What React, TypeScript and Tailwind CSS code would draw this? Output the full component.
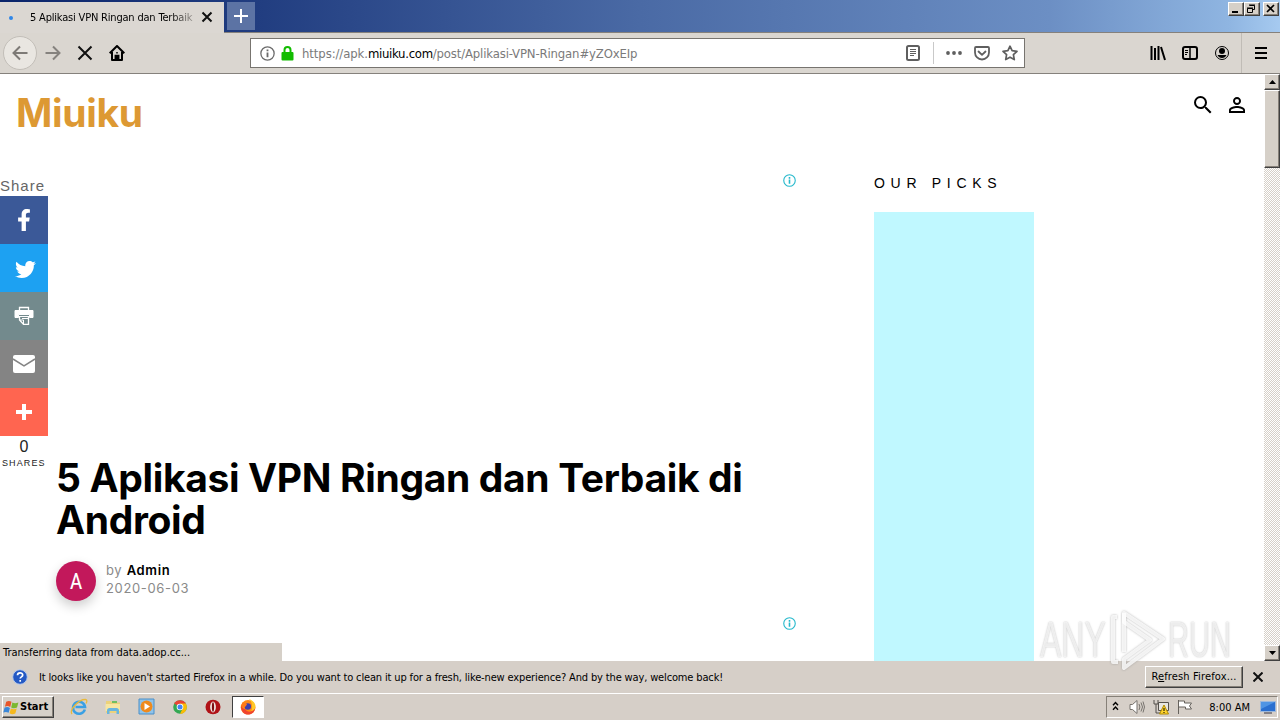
import type { ReactNode } from 'react';
import { FaFacebookF, FaTwitter } from 'react-icons/fa';
import { MdPersonOutline, MdSearch } from 'react-icons/md';

const UI = "font-['DejaVu_Sans_Condensed','DejaVu_Sans',sans-serif] [font-stretch:condensed]";
const RAISED =
  'border border-t-white border-l-white border-r-[#404040] border-b-[#404040] bg-[#d6d0c8] shadow-[inset_-1px_-1px_0_#868078]';

export default function App() {
  return (
    <div className={`relative flex h-[720px] w-[1280px] flex-col overflow-hidden bg-white text-black ${UI}`}>
      <TitleBar />
      <Toolbar />
      <div className="relative flex h-[587px] bg-white">
        <Page />
        <Scrollbar />
        <div className="absolute bottom-0 left-0 flex h-[18px] w-[282px] items-center bg-[#d6d0c8] pl-[3px] pt-[2px] text-[11px]">
          Transferring data from data.adop.cc...
        </div>
      </div>
      <Notification />
      <Taskbar />
      <Watermark />
    </div>
  );
}

function TitleBar() {
  return (
    <div className="flex h-[33px] border-b border-[#85817c] bg-[linear-gradient(to_right,#0a246a,#213d80_20%,#4a6aa5_50%,#6c8fc4_82%,#8fb5e1_96%,#a6caf0)] pt-[2px]">
      <div className="-mb-px flex w-[224px] items-center bg-[#dbd7d2] text-[11px]">
        <span className="ml-[9px] h-1 w-1 rounded-full bg-[#2f86e8]" />
        <span className="ml-[17px] w-[163px] whitespace-nowrap bg-linear-to-r from-black from-82% to-[#a09c97] bg-clip-text pt-px tracking-[-0.19px] text-transparent">
          5 Aplikasi VPN Ringan dan Terbaik
        </span>
        <svg className="mb-[2px] ml-[8px] h-[12px] w-[12px]" viewBox="0 0 12 12" stroke="#111" strokeWidth="2">
          <path d="M1.5 1.500l9 9M10.500 1.500l-9 9" />
        </svg>
      </div>
      <div className="ml-[3px] flex h-7 w-7 items-center justify-center bg-[#5c73a4]">
        <svg className="h-[14px] w-[14px]" viewBox="0 0 14 14" stroke="#fff" strokeWidth="2">
          <path d="M7 0v14M0 7h14" />
        </svg>
      </div>
      <div className="ml-auto flex pr-px">
        <WinButton>
          <path d="M4 10h6" strokeWidth="2" />
        </WinButton>
        <WinButton>
          <path d="M5.500 3.500h5v4h-2M5 3h6M3.500 6.500h5v4h-5zM3 6h6" />
        </WinButton>
        <span className="w-[3px]" />
        <WinButton>
          <path d="M4 3l7 7M11 3l-7 7" strokeWidth="1.700" />
        </WinButton>
      </div>
    </div>
  );
}

function WinButton({ children }: { children: ReactNode }) {
  return (
    <span className={`h-[14px] w-4 ${RAISED}`}>
      <svg className="-ml-px -mt-px h-[14px] w-4 max-w-none" viewBox="0 0 16 14" fill="none" stroke="#000">
        {children}
      </svg>
    </span>
  );
}

function Toolbar() {
  return (
    <div className="flex h-[41px] items-center border-b border-[#85817c] bg-[#dad6d0]">
      <span className="ml-[3px] flex h-[34px] w-[34px] items-center justify-center rounded-full border border-[#c2beb8] bg-[#e9e6e1]">
        <svg className="h-4 w-4" viewBox="0 0 16 16" fill="none" stroke="#7d7a76" strokeWidth="2">
          <path d="M15.500 8H1.500M8 1.500L1.500 8 8 14.500" />
        </svg>
      </span>
      <svg className="ml-[8px] h-4 w-4" viewBox="0 0 16 16" fill="none" stroke="#85827e" strokeWidth="2">
        <path d="M.5 8h14M8 1.500L14.500 8 8 14.500" />
      </svg>
      <svg className="ml-[16px] h-4 w-4" viewBox="0 0 16 16" fill="none" stroke="#111" strokeWidth="2">
        <path d="M1.500 1.500l13 13M14.500 1.500l-13 13" />
      </svg>
      <svg className="ml-[16px] h-4 w-4" viewBox="0 0 16 16" fill="none" stroke="#000" strokeWidth="2">
        <path d="M.7 8.300L8 1l7.300 7.300M3 7v8h10V7" strokeLinejoin="round" />
        <path d="M6.300 15v-4.500h3.400V15zM8 7v1.500" fill="#000" strokeWidth="1.500" />
      </svg>

      <div className="ml-[125px] flex h-[30px] w-[775px] items-center border border-[#77746f] bg-white text-[13px]">
        <InfoIcon className="ml-[9px] h-[15px] w-[15px] text-[#6b6b6b]" />
        <svg className="ml-[6px] h-[15px] w-[13px]" viewBox="0 0 13 15" fill="none">
          <path d="M3.500 7V4a3 3 0 0 1 6 0v3" stroke="#12bc00" strokeWidth="2" />
          <rect x=".5" y="6" width="12" height="8.500" rx="1" fill="#12bc00" />
        </svg>
        <span className="ml-[8px] whitespace-nowrap pt-[2px] tracking-[-0.09px] text-[#7a7a7a]">
          https://apk.
          <span className="tracking-[-0.300px] text-black">miuiku.com</span>
          <span className="tracking-[-0.150px]">/post/Aplikasi-VPN-Ringan#yZOxEIp</span>
        </span>
        <div className="ml-auto flex items-center text-[#5f5f5f]">
          <svg className="h-4 w-4" viewBox="0 0 16 16" fill="none" stroke="currentColor">
            <rect x="2" y="1" width="12" height="14" rx="1.500" strokeWidth="2" />
            <path d="M5 4.500h6M5 6.500h6M5 8.500h6M5 10.500h4" />
          </svg>
          <span className="ml-[12px] h-[22px] w-px bg-[#c9c9c9]" />
          <svg className="ml-[12px] h-4 w-4" viewBox="0 0 16 16" fill="currentColor">
            <circle cx="2" cy="8" r="1.900" />
            <circle cx="8" cy="8" r="1.900" />
            <circle cx="14" cy="8" r="1.900" />
          </svg>
          <svg className="ml-[12px] h-4 w-4" viewBox="0 0 16 16" fill="none" stroke="currentColor" strokeWidth="1.800">
            <path d="M2 2h12a1 1 0 0 1 1 1v4.500a7 7 0 0 1-14 0V3a1 1 0 0 1 1-1z" />
            <path d="M4.500 6.500L8 9.800l3.500-3.300" strokeLinecap="round" strokeLinejoin="round" />
          </svg>
          <svg className="ml-[12px] mr-[6px] h-4 w-4" viewBox="0 0 16 16" fill="none" stroke="currentColor" strokeWidth="1.700">
            <path d="M8 1.200l2.100 4.500 4.900.6-3.600 3.400.9 4.900L8 12.200l-4.300 2.400.9-4.900L1 6.300l4.900-.6z" strokeLinejoin="round" />
          </svg>
        </div>
      </div>

      <div className="ml-auto flex h-full items-center">
        <svg className="h-4 w-4" viewBox="0 0 16 16" stroke="#000" strokeWidth="2">
          <path d="M1.500 1v14M5 3v12M8.500 1v14M11 2l4 13" />
        </svg>
        <svg className="ml-[16px] h-4 w-4" viewBox="0 0 16 16" fill="none" stroke="#000">
          <rect x="1" y="2" width="14" height="12" rx="2" strokeWidth="2" />
          <path d="M8 2v12" strokeWidth="1.500" />
          <path d="M3 5.500h3M3 7.500h3M3 9.500h2" />
        </svg>
        <svg className="ml-[16px] h-4 w-4" viewBox="0 0 16 16">
          <circle cx="8" cy="8" r="6.500" fill="none" stroke="#000" />
          <circle cx="8" cy="6" r="3" />
          <path d="M3.500 10h9c-.8 2-2.400 3-4.500 3s-3.700-1-4.500-3z" />
        </svg>
        <span className="ml-[11px] h-full w-px bg-[#c0bcb6]" />
        <svg className="ml-[11px] mr-[11px] h-4 w-4" viewBox="0 0 16 16" stroke="#000" strokeWidth="2">
          <path d="M2 3h12M2 8h12M2 13h12" />
        </svg>
      </div>
    </div>
  );
}

function InfoIcon({ className }: { className: string }) {
  return (
    <svg className={className} viewBox="0 0 14 14" fill="none" stroke="currentColor">
      <circle cx="7" cy="7" r="6.200" strokeWidth="1.200" />
      <path d="M7 6v4.500M7 3.300v1.700" strokeWidth="1.700" />
    </svg>
  );
}

function Page() {
  return (
    <div className="flex w-[1264px] flex-col font-[Inter,sans-serif]">
      <header className="flex h-[80px] shrink-0 justify-between pl-[16px] pr-[15px]">
        <span className="mt-[14px] text-[39px] font-bold leading-[50px] tracking-[-0.300px] text-[#dd9933]">
          Miuiku
        </span>
        <div className="mt-[19px] flex gap-[10px]">
          <MdSearch className="h-6 w-6" />
          <MdPersonOutline className="h-6 w-6" />
        </div>
      </header>
      <div className="flex flex-1 overflow-hidden">
        <ShareBar />
        <Article />
        <aside className="ml-[76px] flex flex-col font-['Liberation_Sans',sans-serif]">
          <h4 className="mt-[19px] w-[160px] whitespace-nowrap text-[14px] leading-[20px] tracking-[5.700px]">
            OUR PICKS
          </h4>
          <div className="mt-[19px] w-[160px] flex-1 bg-[#c0f8ff]" />
        </aside>
      </div>
    </div>
  );
}

function ShareBar() {
  return (
    <div className="flex w-12 flex-col text-white *:shrink-0">
      <span className="mt-[22px] h-5 font-['Liberation_Sans',sans-serif] text-[15px] leading-[20px] tracking-[1px] text-[#666]">
        Share
      </span>
      <div className="flex h-12 items-center justify-center bg-[#3b5998]">
        <FaFacebookF className="mb-px mr-px h-[22px] w-[22px]" />
      </div>
      <div className="flex h-12 items-center justify-center bg-[#1da1f2]">
        <FaTwitter className="ml-[2px] mt-[2px] h-[21px] w-[21px]" />
      </div>
      <div className="flex h-12 items-center justify-center bg-[#738a8d]">
        <svg className="h-5 w-5" viewBox="0 0 20 20" fill="none" stroke="#fff">
          <path d="M5.500 4V1.500h9V4" strokeWidth="1.300" />
          <path d="M1 4.500h18v7h-3.500v-3h-11v3H1z" fill="#fff" />
          <path d="M5.500 10v4l4 4.300h5V10" strokeWidth="1.300" />
          <path d="M6 10.500h8M8 12.500h6M6 14h3.500v4" />
        </svg>
      </div>
      <div className="flex h-12 items-center justify-center bg-[#848484]">
        <svg className="h-[18px] w-[22px]" viewBox="0 0 22 18">
          <rect width="22" height="18" rx="2" fill="#fff" />
          <path d="M0 4l11 6.800L22 4" fill="none" stroke="#848484" strokeWidth="1.500" />
        </svg>
      </div>
      <div className="flex h-12 items-center justify-center bg-[#ff6550]">
        <svg className="h-4 w-4" viewBox="0 0 16 16" stroke="#fff" strokeWidth="4">
          <path d="M8 0v16M0 8h16" />
        </svg>
      </div>
      <span className="mt-px self-center font-['Liberation_Sans',sans-serif] text-[16px] leading-[20px] text-[#222]">
        0
      </span>
      <span className="ml-[2px] font-['Liberation_Sans',sans-serif] text-[9px] leading-[12px] tracking-[1.100px] text-[#222]">
        SHARES
      </span>
    </div>
  );
}

function Article() {
  return (
    <article className="flex w-[750px] flex-col pl-[8px]">
      <div className="flex h-[303px] shrink-0 justify-end pr-[2px] pt-[20px]">
        <InfoIcon className="h-[13px] w-[13px] text-[#26b9cc]" />
      </div>
      <h1 className="text-[39px] font-bold leading-[42px] tracking-[-0.350px]">
        5 Aplikasi VPN Ringan dan Terbaik di Android
      </h1>
      <div className="mt-[20px] flex">
        <span className="flex h-10 w-10 items-center justify-center rounded-full bg-[#c2185b] font-[Roboto,sans-serif] text-[22px] text-white shadow-[0_5px_12px_rgba(0,0,0,0.2)]">
          A
        </span>
        <div className="ml-[10px] flex flex-col items-start text-[13px] leading-[18px] tracking-[0.650px] text-[#8a8a8a]">
          <span>
            by <b className="font-semibold text-black">Admin</b>
          </span>
          <span>2020-06-03</span>
        </div>
      </div>
      <div className="mt-[16px] flex justify-end pr-[2px]">
        <InfoIcon className="h-[13px] w-[13px] text-[#26b9cc]" />
      </div>
    </article>
  );
}

function Scrollbar() {
  return (
    <div className="flex w-4 flex-col bg-[repeating-conic-gradient(#d6d0c8_0_25%,#fff_0_50%)] bg-size-[2px_2px]">
      <span className={`flex h-4 items-center justify-center ${RAISED}`}>
        <svg className="h-1 w-[7px]" viewBox="0 0 7 4">
          <path d="M3.500 0L7 4H0z" />
        </svg>
      </span>
      <span className={`h-[78px] ${RAISED}`} />
      <span className={`mt-auto flex h-4 items-center justify-center ${RAISED}`}>
        <svg className="h-1 w-[7px]" viewBox="0 0 7 4">
          <path d="M3.500 4L7 0H0z" />
        </svg>
      </span>
    </div>
  );
}

function Notification() {
  return (
    <div className="flex h-[32px] items-center bg-[#d6cfc8] text-[11px]">
      <svg className="ml-[12px] h-4 w-4" viewBox="0 0 16 16">
        <circle cx="8" cy="8" r="7.300" fill="#2459c4" stroke="#b9cbea" />
        <path d="M5.500 6.300c0-3.400 5.200-3.200 5.200-.3 0 2-2.500 1.700-2.500 3.600M8.200 11v1.800" fill="none" stroke="#fff" strokeWidth="1.700" />
      </svg>
      <span className="ml-[11px] whitespace-nowrap pt-[2px] tracking-[-0.145px]">
        It looks like you haven't started Firefox in a while. Do you want to clean it up for a fresh, like-new
        experience? And by the way, welcome back!
      </span>
      <span className={`ml-auto -mt-px flex h-[22px] w-[98px] items-center justify-center whitespace-nowrap pt-px tracking-[0.140px] ${RAISED}`}>
        <span>
          R<u>e</u>fresh Firefox...
        </span>
      </span>
      <svg className="ml-[10px] mr-[17px] h-[10px] w-[10px]" viewBox="0 0 10 10" stroke="#111" strokeWidth="2">
        <path d="M.5.5l9 9M9.500.5l-9 9" />
      </svg>
    </div>
  );
}

function Taskbar() {
  return (
    <div className="flex h-[27px] items-center border-t border-white bg-[#d6cfc8] text-[11px]">
      <span className={`ml-[2px] flex h-[22px] w-[52px] items-center ${RAISED}`}>
        <svg className="h-[17px] w-[17px]" viewBox="0 0 16 16">
          <path d="M3 2.500c2-1 3.500-.8 5 .2L6.800 7.500c-1.600-1-3.200-1.100-5-.3z" fill="#e8562a" />
          <path d="M8.800 3.200c1.700 1 3.400 1 5.700 0L13.200 8c-2 1-3.800.9-5.500-.1z" fill="#7cb82f" />
          <path d="M1.500 8.100c1.900-.9 3.500-.7 5 .3l-1.200 4.600c-1.500-1-3.200-1.200-5-.3z" fill="#3b87d8" />
          <path d="M7.400 8.900c1.700 1 3.500 1 5.500 0l-1.300 4.700c-2 1-3.700 1-5.400-.1z" fill="#f5b81e" />
        </svg>
        <b className="pt-px">Start</b>
      </span>
      <div className="ml-[16px] flex items-center gap-[16px]">
        <svg className="h-[18px] w-[18px]" viewBox="0 0 18 18" fill="none">
          <path d="M14.800 11.500A6 6 0 1 1 15 9H5.500" stroke="#3aa0e4" strokeWidth="2.600" />
          <path d="M2 16C-1 12 9 1 15.500 1.500c2 .3 1.500 2.500.5 4" stroke="#e9b93a" strokeWidth="1.300" />
        </svg>
        <svg className="h-[18px] w-[18px]" viewBox="0 0 18 18">
          <path d="M2 3h5l1 1.500h8V15H2z" fill="#ecd27a" />
          <path d="M8 3h5v2H8z" fill="#6fbf62" />
          <path d="M1.500 6h14.500v7H1.500z" fill="#f7e6a2" />
          <path d="M3 16v-3.500c0-1.500 1-2.500 2.500-2.500h7c1.500 0 2.500 1 2.500 2.500V16h-2.500v-3h-7v3z" fill="#69b5de" />
        </svg>
        <svg className="h-[18px] w-[18px]" viewBox="0 0 18 18">
          <path d="M1 1h15v15H1z" fill="#8fc3ea" stroke="#4a8fc8" />
          <circle cx="8.500" cy="8.500" r="6" fill="#ef8a1d" />
          <path d="M6.500 5l5.500 3.500L6.500 12z" fill="#fff" />
        </svg>
        <svg className="h-[16px] w-[16px]" viewBox="0 0 16 16">
          <circle cx="8" cy="8" r="6.800" fill="#34a853" />
          <path d="M8 8L2.100 4.600A6.800 6.800 0 0 1 13.900 4.600z" fill="#ea4335" />
          <path d="M8 4.600h5.900A6.800 6.800 0 0 1 8 14.800L11 9z" fill="#fbbc05" />
          <circle cx="8" cy="8" r="3.300" fill="#fff" />
          <circle cx="8" cy="8" r="2.500" fill="#4285f4" />
        </svg>
        <svg className="ml-px h-4 w-4" viewBox="0 0 16 16">
          <ellipse cx="8" cy="8" rx="7.500" ry="7.300" fill="#b01217" />
          <ellipse cx="8" cy="8" rx="2.900" ry="5.400" fill="#f0e4e0" />
          <ellipse cx="8" cy="8" rx="1.100" ry="4.700" fill="#7c0b0f" />
        </svg>
      </div>
      <span className="ml-[11px] flex h-[22px] w-8 items-center justify-center border border-t-[#404040] border-l-[#404040] border-r-white border-b-white bg-white">
        <svg className="h-4 w-4" viewBox="0 0 16 16">
          <circle cx="8" cy="8.300" r="7.300" fill="#ff8a16" />
          <path d="M1 6C.5 12 4 15.600 8 15.600c4.500 0 7.300-3.300 7.300-7.300-2 5-8 6-10 2C3 10 1.500 8 1 6z" fill="#f0452f" />
          <path d="M9 0c5 2 7 5 6.300 9-1 2-3 3-4 3C13 8 12 3 9 0z" fill="#ffc928" />
          <circle cx="7.800" cy="7.500" r="3.200" fill="#3c3fae" />
          <path d="M2 4c2-1 4 0 5 1.500L5 8 2 8z" fill="#ff7a1a" />
        </svg>
      </span>
      <div className="ml-auto mr-[2px] flex h-[22px] w-[172px] items-center border border-t-[#868078] border-l-[#868078] border-r-white border-b-white">
        <svg className="mb-[2px] ml-[5px] h-[10px] w-[7px]" viewBox="0 0 7 10" fill="none" stroke="#000" strokeWidth="1.400">
          <path d="M1 4.200l2.500-2.700L6 4.200M1 8.700L3.500 6 6 8.700" />
        </svg>
        <svg className="ml-[10px] h-4 w-4" viewBox="0 0 16 16" fill="none" stroke="#77736e">
          <path d="M1 5.500h2.500L8 1.500v13l-4.500-4H1z" fill="#fff" />
          <path d="M10 5q1.800 3 0 6M12 3.500q3 4.500 0 9M14 2.500q3 5.500 0 11" />
        </svg>
        <svg className="ml-[8px] h-4 w-4" viewBox="0 0 16 16" fill="none" stroke="#55514c">
          <path d="M5.500 3.500h10v8h-10z" fill="#e8e6e2" />
          <path d="M1 1v4h4V1M3 5v9h5" />
          <path d="M11 6l4.500 9h-9z" fill="#ffd42e" stroke="#b08a00" />
          <path d="M11 9v3M11 13v1" stroke="#000" />
        </svg>
        <svg className="ml-[8px] h-4 w-4" viewBox="0 0 16 16" fill="#fff" stroke="#66625d">
          <path d="M1.500 1v14M1.500 2h6v2h7l-2 3 2 3h-6V8h-7z" />
        </svg>
        <span className="ml-auto whitespace-nowrap pt-[2px]">8:00 AM</span>
        <svg className="ml-[10px] mr-px h-[14px] w-4" viewBox="0 0 16 14">
          <path d="M.5 1.500h15v10H.5z" fill="#2a6fd0" stroke="#9db8dc" />
          <path d="M1 2h14L1 9z" fill="#4f94e4" />
          <path d="M4 13h8" stroke="#334" />
        </svg>
      </div>
    </div>
  );
}

function Watermark() {
  return (
    <div className="absolute left-[1040px] top-[608px] flex h-16 w-[196px] items-center whitespace-nowrap font-['Liberation_Sans',sans-serif] text-[50px] leading-none text-white/75 [text-shadow:0_0_2px_rgba(130,130,130,0.6)]">
      <span className="w-[66px] origin-left scale-x-[0.64]">ANY</span>
      <svg
        className="h-16 w-[62px] drop-shadow-[0_0_1px_rgba(130,130,130,0.7)]"
        viewBox="0 0 60 64"
        fill="none"
        stroke="#fff"
        strokeOpacity=".8"
        strokeWidth="4"
        strokeLinejoin="round"
      >
        <path d="M17 5l39 26-39 29v-9l26-19-26-18z" />
        <path d="M17 5v39M10 9H6v45h5" />
      </svg>
      <span className="w-[64px] origin-left scale-x-[0.580]">RUN</span>
    </div>
  );
}
